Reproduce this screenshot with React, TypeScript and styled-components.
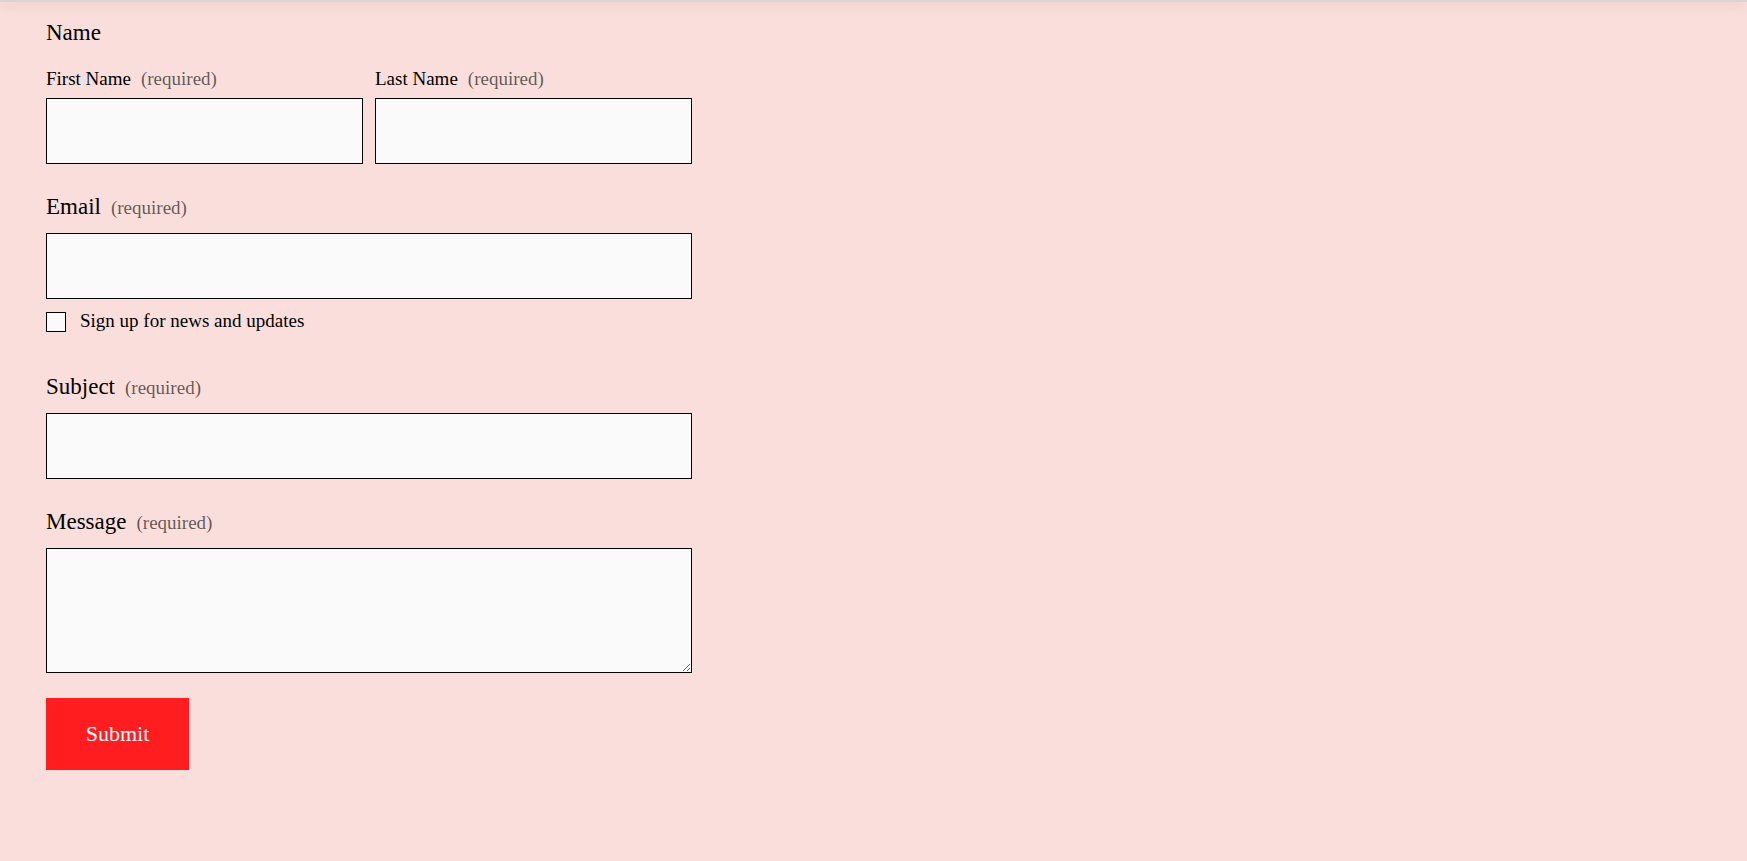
import styled, { createGlobalStyle } from "styled-components";

const GlobalStyle = createGlobalStyle`
    html, body{
        margin:0;
        padding:0;
        background-color:#f9dedb;
    }

    body{
        font-family:"Liberation Serif", "Times New Roman", serif;
        color:#000;
    }
`;

const Page = styled.div`
    min-height:100vh;
    background-color:#f9dedb;
`,

TopBar = styled.div`
    height:2px;
    background-color:#d9d3d2;
    box-shadow:0 3px 12px rgba(0, 0, 0, 0.18);
`,

Form = styled.form`
    width:646px;
    display:flex;
    flex-direction:column;
    padding:16px 0 0 46px;
`,

Fieldset = styled.fieldset`
    border:none;
    margin:0;
    padding:0;
    min-width:0;
`,

Legend = styled.legend`
    padding:1px 0 0;
    font-size:23px;
    line-height:28px;
`,

Row = styled.div`
    display:grid;
    grid-template-columns:1fr 1fr;
    gap:12px;
    margin-top:20px;
`,

Group = styled.div<{ $gap?: number }>`
    display:flex;
    flex-direction:column;
    margin-top:${({ $gap }) => $gap ?? 0}px;
`,

Label = styled.label<{ $small?: boolean }>`
    display:block;
    font-size:${({ $small }) => ($small ? "19px" : "23px")};
    line-height:${({ $small }) => ($small ? "24px" : "28px")};
    padding-top:${({ $small }) => ($small ? "0" : "1px")};
    margin-bottom:${({ $small }) => ($small ? "7px" : "12px")};
`,

Required = styled.span`
    margin-left:10px;
    font-size:19px;
    line-height:20px;
    color:rgba(0, 0, 0, 0.62);
`,

TextInput = styled.input`
    box-sizing:border-box;
    width:100%;
    height:66px;
    margin:0;
    padding:12px;
    border:1px solid #000;
    border-radius:0;
    background-color:#fafafa;
    font:inherit;
    font-size:18px;
    outline:none;
`,

TextArea = styled.textarea`
    box-sizing:border-box;
    display:block;
    width:100%;
    height:125px;
    margin:0;
    padding:12px;
    border:1px solid #000;
    border-radius:0;
    background-color:#fafafa;
    font:inherit;
    font-size:18px;
    outline:none;
`,

CheckRow = styled.label`
    display:flex;
    align-items:flex-start;
    gap:14px;
    margin-top:13px;
    cursor:pointer;
`,

CheckText = styled.span`
    font-size:19px;
    line-height:17px;
`,

CheckBox = styled.input`
    appearance:none;
    box-sizing:border-box;
    flex-shrink:0;
    width:20px;
    height:20px;
    margin:0;
    border:1px solid #000;
    background-color:#fafafa;
    cursor:pointer;

    &:checked{
        background-color:#000;
    }
`,

SubmitButton = styled.button`
    align-self:flex-start;
    width:143px;
    height:72px;
    margin-top:25px;
    padding:0;
    border:none;
    border-radius:0;
    background-color:#ff1d20;
    color:#fff;
    font-family:"Liberation Serif", "Times New Roman", serif;
    font-size:22px;
    cursor:pointer;
`;

const App = () => {
    return(
        <Page>
            <GlobalStyle />
            <TopBar />
            <Form onSubmit={(e) => e.preventDefault()}>
                <Fieldset>
                    <Legend>Name</Legend>
                    <Row>
                        <Group>
                            <Label $small htmlFor="fname">
                                First Name<Required>(required)</Required>
                            </Label>
                            <TextInput id="fname" type="text" />
                        </Group>
                        <Group>
                            <Label $small htmlFor="lname">
                                Last Name<Required>(required)</Required>
                            </Label>
                            <TextInput id="lname" type="text" />
                        </Group>
                    </Row>
                </Fieldset>

                <Group $gap={28}>
                    <Label htmlFor="email">
                        Email<Required>(required)</Required>
                    </Label>
                    <TextInput id="email" type="email" />
                    <CheckRow>
                        <CheckBox type="checkbox" />
                        <CheckText>Sign up for news and updates</CheckText>
                    </CheckRow>
                </Group>

                <Group $gap={40}>
                    <Label htmlFor="subject">
                        Subject<Required>(required)</Required>
                    </Label>
                    <TextInput id="subject" type="text" />
                </Group>

                <Group $gap={28}>
                    <Label htmlFor="message">
                        Message<Required>(required)</Required>
                    </Label>
                    <TextArea id="message" />
                </Group>

                <SubmitButton type="submit">Submit</SubmitButton>
            </Form>
        </Page>
    )
}

export default App;
